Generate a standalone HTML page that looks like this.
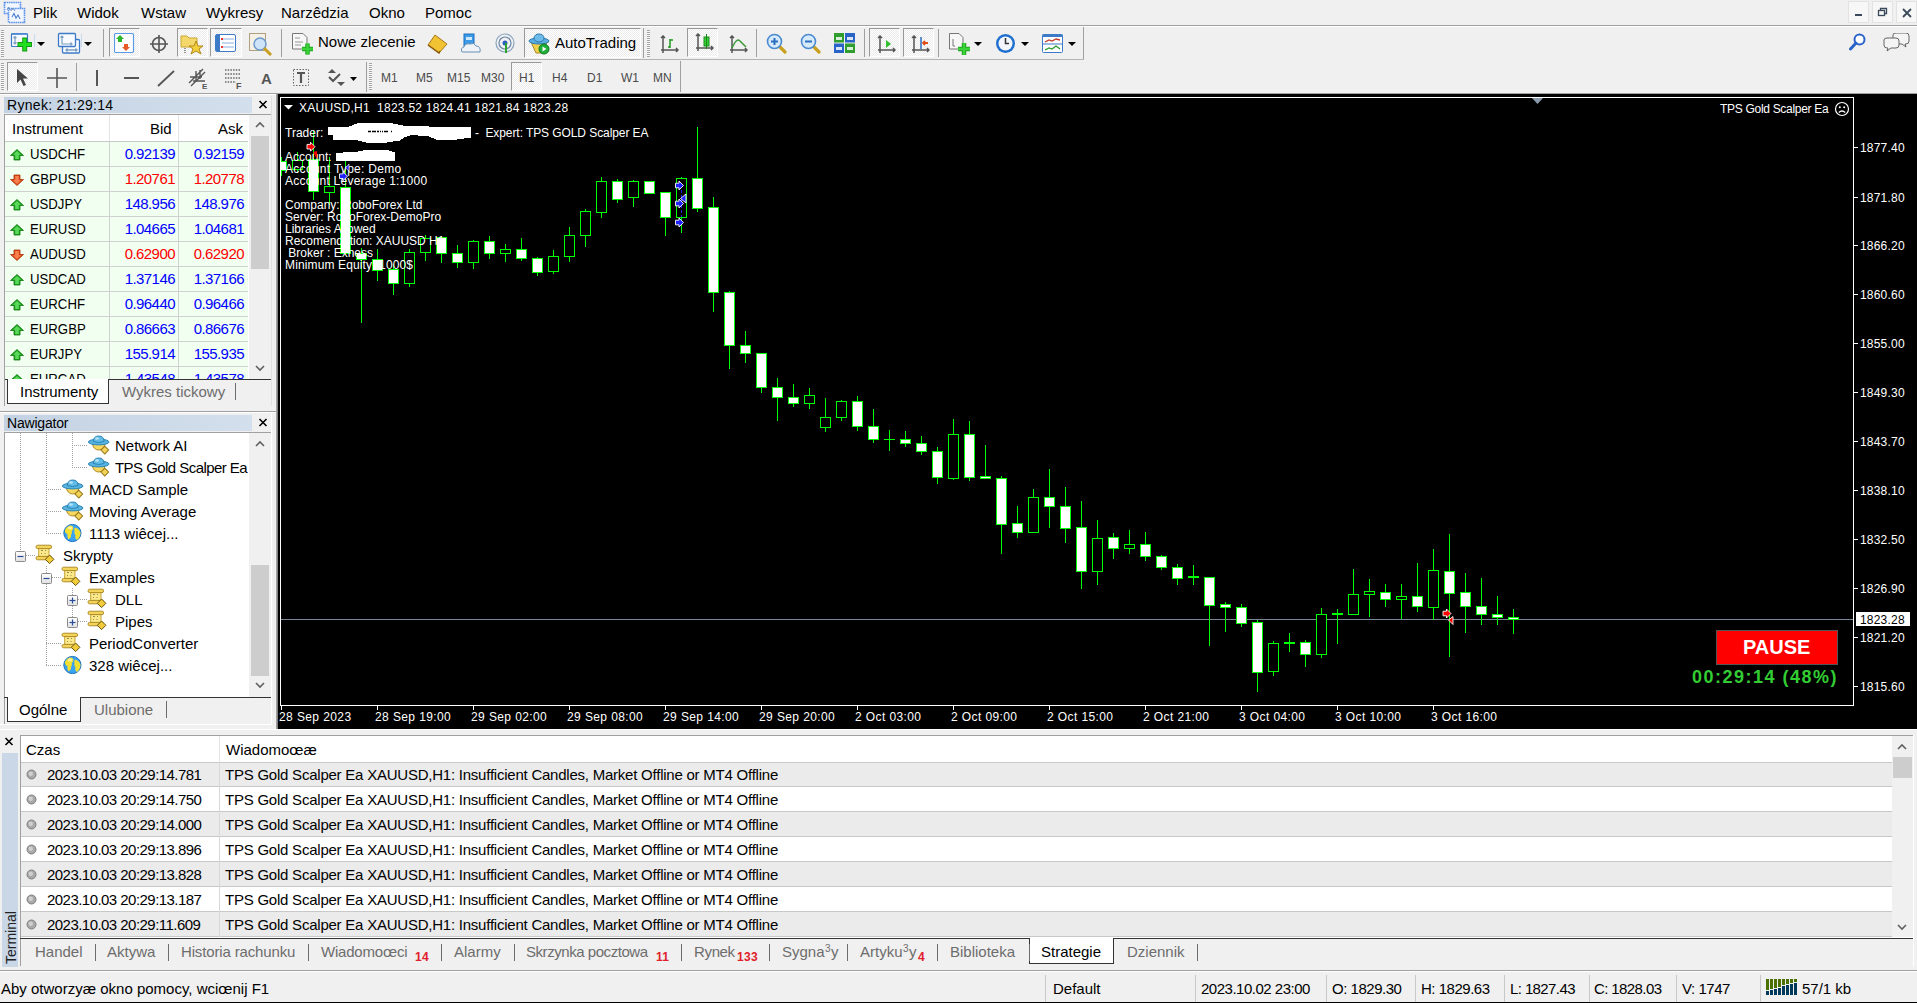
<!DOCTYPE html><html><head><meta charset="utf-8"><style>
*{margin:0;padding:0;box-sizing:border-box}
html,body{width:1917px;height:1003px;overflow:hidden;background:#f0f0f0;font-family:"Liberation Sans",sans-serif;color:#000}
.a{position:absolute}
.t{position:absolute;white-space:nowrap;line-height:1}
.menu{font-size:15px}
.ui{font-size:15px}
.sep{position:absolute;width:1px;background:#a0a0a0}
.grip{position:absolute;width:3px;background:repeating-linear-gradient(to bottom,#a4a4a4 0 1px,#fafafa 1px 2px)}
.pressed{position:absolute;border-top:1px solid #999;border-left:1px solid #999;border-right:1px solid #fff;border-bottom:1px solid #fff;background:repeating-conic-gradient(#ffffff 0 25%,#ebebeb 0 50%) 0 0/2px 2px}
.tf{position:absolute;font-size:12px;color:#4a4a4a;white-space:nowrap;line-height:1;font-weight:normal}
.row{position:absolute;left:5px;width:243px;height:25px;background:#f0fff0;border-bottom:1px solid #d0d0d0}
.cell{position:absolute;white-space:nowrap;line-height:1;font-size:15px}
.trow{position:absolute;left:21px;width:1871px;height:25px;border-bottom:1px solid #c8c8c8}
.chart{position:absolute;font-size:12px;color:#fff;white-space:nowrap;line-height:1}
</style></head><body>
<svg class="a" style="left:3px;top:1px" width="23" height="23" viewBox="0 0 23 23">
<rect x="1.5" y="1.5" width="16" height="11" fill="#f2f7ff" stroke="#5f93ea" stroke-width="1.6" stroke-dasharray="1.6 0.6"/>
<rect x="5.5" y="7.5" width="16" height="14" fill="#f2f7ff" stroke="#5f93ea" stroke-width="1.6" stroke-dasharray="1.6 0.6"/>
<path d="M4 9 L5.5 6 L7 9 H9 L10 7 L12 10" stroke="#6a90c8" fill="none" stroke-width="1"/>
<path d="M9 16 L11 12.5 L13 17 L15 14 L17 18" stroke="#4a7fd0" fill="none" stroke-width="1.1"/>
</svg>
<div class="t menu" style="left:33px;top:5px">Plik</div>
<div class="t menu" style="left:77px;top:5px">Widok</div>
<div class="t menu" style="left:141px;top:5px">Wstaw</div>
<div class="t menu" style="left:206px;top:5px">Wykresy</div>
<div class="t menu" style="left:281px;top:5px">Narzêdzia</div>
<div class="t menu" style="left:369px;top:5px">Okno</div>
<div class="t menu" style="left:425px;top:5px">Pomoc</div>
<div class="a" style="left:1848px;top:1px;width:21px;height:22px;background:#f7f7f7;border:1px solid #e2e2e2"></div>
<div class="a" style="left:1872px;top:1px;width:21px;height:22px;background:#f7f7f7;border:1px solid #e2e2e2"></div>
<div class="a" style="left:1896px;top:1px;width:21px;height:22px;background:#f7f7f7;border:1px solid #e2e2e2"></div>
<div class="a" style="left:1855px;top:14px;width:7px;height:2px;background:#3a4a5a"></div>
<svg class="a" style="left:1877px;top:6px" width="12" height="12" viewBox="0 0 12 12"><rect x="1.5" y="4.5" width="6" height="5" fill="none" stroke="#3a4a5a" stroke-width="1.3"/><path d="M3.5 4.5 V2.5 H9.5 V7.5 H7.5" fill="none" stroke="#3a4a5a" stroke-width="1.3"/></svg>
<svg class="a" style="left:1901px;top:7px" width="12" height="12" viewBox="0 0 12 12"><path d="M2 2 L10 10 M10 2 L2 10" stroke="#3a4a5a" stroke-width="1.8"/></svg>
<div class="a" style="left:0;top:25px;width:1917px;height:1px;background:#a0a0a0"></div>
<div class="a" style="left:0;top:26px;width:1917px;height:1px;background:#fff"></div>
<div class="a" style="left:0;top:59px;width:1084px;height:1px;background:#b4b4b4"></div>
<div class="grip" style="left:1px;top:30px;height:27px"></div>
<svg class="a" style="left:10px;top:32px" width="24" height="21" viewBox="0 0 24 21">
<rect x="1.5" y="1.5" width="16" height="13" rx="1" fill="#f7fbff" stroke="#3d7ac7" stroke-width="1.2"/><path d="M2 2.2 H17" stroke="#5a94d8" stroke-width="1.5"/>
<path d="M5 4.5 V12 M3.5 6 L5 4.5 L6.5 6 M3.5 10.5 L5 12 L6.5 10.5" stroke="#7e9fc0" stroke-width="1.2" fill="none"/>
<path d="M7.5 12.5 H22 M14.7 5.5 V19.5" stroke="#129a12" stroke-width="5"/><path d="M8.5 12.5 H21 M14.7 6.5 V18.5" stroke="#20e020" stroke-width="3"/>
</svg>
<div class="a" style="left:34px;top:34px;width:1px;height:13px;background:#c8daf0"></div>
<svg class="a" style="left:37px;top:42px" width="9" height="5"><path d="M0 0 H8 L4 4 Z" fill="#000"/></svg>
<svg class="a" style="left:57px;top:32px" width="24" height="23" viewBox="0 0 24 23">
<rect x="5.5" y="7.5" width="17" height="13.5" rx="1" fill="#fafcff" stroke="#3d7ac7" stroke-width="1.3"/>
<rect x="1.5" y="1.5" width="17" height="13" rx="1" fill="#f7fbff" stroke="#3d7ac7" stroke-width="1.3"/>
<path d="M5 4 V12 H15 M3.5 5.5 L5 4 L6.5 5.5 M13.5 10.5 L15 12 L13.5 13.5" stroke="#7e9fc0" stroke-width="1.2" fill="none"/>
<path d="M9 18 H20 M10.5 16.5 L9 18 L10.5 19.5 M18.5 16.5 L20 18 L18.5 19.5" stroke="#7e9fc0" stroke-width="1.4" fill="none"/>
</svg>
<div class="a" style="left:81px;top:34px;width:1px;height:13px;background:#c8daf0"></div>
<svg class="a" style="left:84px;top:42px" width="9" height="5"><path d="M0 0 H8 L4 4 Z" fill="#000"/></svg>
<div class="sep" style="left:103px;top:29px;height:28px"></div>
<div class="pressed" style="left:109px;top:28px;width:31px;height:29px"></div>
<svg class="a" style="left:114px;top:33px" width="21" height="21" viewBox="0 0 21 21">
<rect x="0.5" y="0.5" width="19" height="19" rx="1.5" fill="#fff" stroke="#5b9be6" stroke-width="1.2"/>
<path d="M6 2 L10 6 H8 V9 H4 V6 H2 Z" fill="#2bb52b"/><path d="M12 18 L16 14 H14 V11 H10 V14 H8 Z" fill="#e65a2a"/>
</svg>
<svg class="a" style="left:149px;top:34px" width="20" height="20" viewBox="0 0 20 20">
<circle cx="10" cy="10" r="6.5" fill="none" stroke="#555" stroke-width="1.6"/><path d="M10 1 V19 M1 10 H19" stroke="#555" stroke-width="1.6"/>
</svg>
<div class="pressed" style="left:177px;top:28px;width:31px;height:29px"></div>
<svg class="a" style="left:180px;top:33px" width="25" height="22" viewBox="0 0 25 22">
<path d="M1 3 H7 L9 5 H17 V14 H1 Z" fill="#f5d86b" stroke="#c9a531"/><path d="M16 8 L18 13 L23 13 L19 16 L21 21 L16 18 L11 21 L13 16 L9 13 L14 13 Z" fill="#f2cf3a" stroke="#b08a20"/>
<path d="M5 15 V21" stroke="#333" stroke-dasharray="1 1"/>
</svg>
<div class="pressed" style="left:210px;top:28px;width:32px;height:29px"></div>
<svg class="a" style="left:215px;top:34px" width="22" height="18" viewBox="0 0 22 18">
<rect x="0.5" y="0.5" width="20" height="17" rx="1.5" fill="#fff" stroke="#3d7ac7"/><rect x="1" y="1" width="4" height="16" fill="#3d7ac7"/>
<path d="M7 5 H19 M7 9 H19 M7 13 H19" stroke="#8ab0e0"/><rect x="6" y="4" width="2" height="2" fill="#e33"/><rect x="6" y="12" width="2" height="2" fill="#e33"/>
</svg>
<svg class="a" style="left:249px;top:33px" width="24" height="23" viewBox="0 0 24 23">
<rect x="0.5" y="0.5" width="16" height="17" fill="#f5f0e6" stroke="#b0a080"/>
<circle cx="11" cy="11" r="6" fill="#cfe3f7" stroke="#6c9acb" stroke-width="1.5"/><path d="M15 15 L22 22" stroke="#c9a020" stroke-width="3"/>
</svg>
<div class="sep" style="left:281px;top:29px;height:28px"></div>
<svg class="a" style="left:292px;top:33px" width="23" height="23" viewBox="0 0 23 23">
<path d="M0.5 0.5 H11 L15 4.5 V16 H0.5 Z" fill="#f7f7f7" stroke="#777"/><path d="M3 5 H8 M3 9 H11 M3 12 H9" stroke="#999"/>
<path d="M10 16 H21 M15.5 10.5 V21.5" stroke="#1fa51f" stroke-width="4.5"/><path d="M10 16 H21 M15.5 10.5 V21.5" stroke="#39d239" stroke-width="2.5"/>
</svg>
<div class="t ui" style="left:318px;top:34px">Nowe zlecenie</div>
<svg class="a" style="left:427px;top:34px" width="21" height="20" viewBox="0 0 21 20">
<path d="M8 1 L20 10 L12 19 L1 11 Z" fill="#f1c232" stroke="#a8791a"/><path d="M1 11 L12 19 L13 17" fill="none" stroke="#8a5a10" stroke-width="1.5"/>
</svg>
<svg class="a" style="left:460px;top:33px" width="22" height="21" viewBox="0 0 22 21">
<rect x="4" y="1" width="10" height="12" fill="#3a9ae6" stroke="#1b6fc0"/><rect x="6" y="4" width="6" height="3" fill="#cde6fa"/>
<path d="M2 19 Q0 15 4 14 Q5 10 10 11 Q14 9 16 13 Q21 13 20 19 Z" fill="#eef3f8" stroke="#6b8fb5"/>
</svg>
<svg class="a" style="left:494px;top:33px" width="22" height="21" viewBox="0 0 22 21">
<circle cx="11" cy="10" r="9" fill="none" stroke="#8aa4c0" stroke-width="1.2"/><circle cx="11" cy="10" r="6" fill="none" stroke="#6a86a8" stroke-width="1.2"/><circle cx="11" cy="10" r="2.5" fill="#2a5fc0"/>
<path d="M12 10 V20" stroke="#2aa52a" stroke-width="2"/>
</svg>
<div class="pressed" style="left:524px;top:28px;width:117px;height:30px"></div>
<svg class="a" style="left:528px;top:33px" width="22" height="22" viewBox="0 0 22 22">
<path d="M3 9 L19 9 L14 20 L8 20 Z" fill="#f1d04a" stroke="#a88a20"/>
<ellipse cx="11" cy="8" rx="10" ry="3" fill="#5aaee0" stroke="#2a78b0"/><ellipse cx="11" cy="5" rx="5" ry="4" fill="#6cbbe8" stroke="#2a78b0"/>
<circle cx="16" cy="16" r="5" fill="#1fae3a" stroke="#0b7a20"/><path d="M14.5 13.5 L18.5 16 L14.5 18.5 Z" fill="#fff"/>
</svg>
<div class="t ui" style="left:555px;top:35px">AutoTrading</div>
<div class="sep" style="left:643px;top:28px;height:30px"></div>
<div class="grip" style="left:647px;top:30px;height:27px"></div>
<svg class="a" style="left:660px;top:35px" width="19" height="19" viewBox="0 0 19 19">
<path d="M3 1 V18 M1 15 H18 M1 3 L3 1 L5 3 M16 13 L18 15 L16 17" stroke="#555" stroke-width="1.5" fill="none"/><path d="M10 4 V13 M8 12 H10 M10 5 H13" stroke="#1c9a1c" stroke-width="1.5"/></svg>
<div class="pressed" style="left:687px;top:28px;width:31px;height:29px"></div>
<svg class="a" style="left:695px;top:33px" width="19" height="19" viewBox="0 0 19 19">
<path d="M3 1 V18 M1 15 H18 M1 3 L3 1 L5 3 M16 13 L18 15 L16 17" stroke="#555" stroke-width="1.5" fill="none"/><rect x="9" y="4" width="5" height="9" fill="#35d035" stroke="#1a8a1a"/><path d="M11.5 1 V16" stroke="#1a8a1a"/></svg>
<svg class="a" style="left:729px;top:35px" width="19" height="19" viewBox="0 0 19 19">
<path d="M3 1 V18 M1 15 H18 M1 3 L3 1 L5 3 M16 13 L18 15 L16 17" stroke="#555" stroke-width="1.5" fill="none"/><path d="M3 13 Q8 2 11 6 Q13 8 17 12" stroke="#3a9a3a" stroke-width="1.5" fill="none"/></svg>
<div class="sep" style="left:756px;top:29px;height:28px"></div>
<svg class="a" style="left:766px;top:33px" width="21" height="21" viewBox="0 0 21 21">
<path d="M13 13 L19 19" stroke="#c9a020" stroke-width="3.2" stroke-linecap="round"/><circle cx="8.5" cy="8.5" r="7" fill="#d6eafb" stroke="#4a8ad0" stroke-width="1.6"/><path d="M5 8.5 H12 M8.5 5 V12" stroke="#2a6fc0" stroke-width="2"/></svg>
<svg class="a" style="left:800px;top:33px" width="21" height="21" viewBox="0 0 21 21">
<path d="M13 13 L19 19" stroke="#c9a020" stroke-width="3.2" stroke-linecap="round"/><circle cx="8.5" cy="8.5" r="7" fill="#d6eafb" stroke="#4a8ad0" stroke-width="1.6"/><path d="M5 8.5 H12" stroke="#2a6fc0" stroke-width="2"/></svg>
<svg class="a" style="left:834px;top:33px" width="21" height="20" viewBox="0 0 21 20">
<rect x="0" y="0" width="10" height="9.5" fill="#2f9e2f"/><rect x="11" y="0" width="10" height="9.5" fill="#2a63c8"/><rect x="0" y="10.5" width="10" height="9.5" fill="#2a63c8"/><rect x="11" y="10.5" width="10" height="9.5" fill="#2f9e2f"/>
<rect x="2" y="4" width="6" height="3" fill="#d8f0d8"/><rect x="13" y="4" width="6" height="3" fill="#d8e4f8"/><rect x="2" y="14" width="6" height="3" fill="#d8e4f8"/><rect x="13" y="14" width="6" height="3" fill="#d8f0d8"/>
</svg>
<div class="sep" style="left:864px;top:29px;height:28px"></div>
<div class="pressed" style="left:869px;top:28px;width:31px;height:29px"></div>
<svg class="a" style="left:877px;top:35px" width="19" height="19" viewBox="0 0 19 19">
<path d="M3 1 V18 M1 15 H18 M1 3 L3 1 L5 3 M16 13 L18 15 L16 17" stroke="#555" stroke-width="1.5" fill="none"/><path d="M9 5 L14 9 L9 13 Z" fill="#2fbf2f"/></svg>
<div class="pressed" style="left:903px;top:28px;width:31px;height:29px"></div>
<svg class="a" style="left:911px;top:35px" width="19" height="19" viewBox="0 0 19 19">
<path d="M3 1 V18 M1 15 H18 M1 3 L3 1 L5 3 M16 13 L18 15 L16 17" stroke="#555" stroke-width="1.5" fill="none"/><path d="M10 2 V14" stroke="#2a6fc0" stroke-width="1.5"/><path d="M17 8 H12 M14 6 L12 8 L14 10" stroke="#e0501a" stroke-width="1.8" fill="none"/></svg>
<div class="sep" style="left:938px;top:29px;height:28px"></div>
<svg class="a" style="left:949px;top:33px" width="22" height="23" viewBox="0 0 22 23">
<path d="M0.5 0.5 H10 L14 4.5 V16 H0.5 Z" fill="#f7f7f7" stroke="#777"/><path d="M4 6 V13 H6" stroke="#777" fill="none"/>
<path d="M9 16 H21 M15 10 V22" stroke="#1fa51f" stroke-width="4.5"/><path d="M9 16 H21 M15 10 V22" stroke="#39d239" stroke-width="2.5"/>
</svg>
<svg class="a" style="left:974px;top:42px" width="9" height="5"><path d="M0 0 H8 L4 4 Z" fill="#000"/></svg>
<svg class="a" style="left:995px;top:33px" width="21" height="21" viewBox="0 0 21 21">
<circle cx="10.5" cy="10.5" r="9.5" fill="#1f6fd0"/><circle cx="10.5" cy="10.5" r="7" fill="#f2f6fb"/><path d="M10.5 5 V10.5 H14" stroke="#333" stroke-width="1.5" fill="none"/>
</svg>
<svg class="a" style="left:1021px;top:42px" width="9" height="5"><path d="M0 0 H8 L4 4 Z" fill="#000"/></svg>
<svg class="a" style="left:1042px;top:34px" width="21" height="19" viewBox="0 0 21 19">
<rect x="0.5" y="0.5" width="20" height="18" rx="1" fill="#fff" stroke="#3d7ac7"/><rect x="0.5" y="0.5" width="20" height="2.5" fill="#3d7ac7"/><path d="M1 10 H20" stroke="#3d7ac7"/>
<path d="M3 8 L7 6 L10 7 L14 5 L18 6" stroke="#c0392b" fill="none" stroke-width="1.3"/><path d="M3 16 L7 14 L10 15 L14 12 L18 15" stroke="#2a9a2a" fill="none" stroke-width="1.3"/>
</svg>
<svg class="a" style="left:1068px;top:42px" width="9" height="5"><path d="M0 0 H8 L4 4 Z" fill="#000"/></svg>
<div class="a" style="left:1083px;top:27px;width:1px;height:32px;background:#a0a0a0"></div>
<svg class="a" style="left:1849px;top:33px" width="17" height="18" viewBox="0 0 17 18">
<circle cx="10.5" cy="6.5" r="5" fill="#fff" stroke="#2a63c8" stroke-width="2"/><path d="M7 10 L1.5 16" stroke="#2a63c8" stroke-width="3" stroke-linecap="round"/>
</svg>
<svg class="a" style="left:1883px;top:33px" width="27" height="19" viewBox="0 0 27 19">
<path d="M10 2 Q10 0 13 0 H23 Q26 0 26 3 V8 Q26 11 23 11 H22 L23 14 L19 11 H13 Q10 11 10 8 Z" fill="#f4f4f4" stroke="#666"/>
<path d="M1 7 Q1 5 4 5 H13 Q16 5 16 8 V12 Q16 15 13 15 H8 L4 18 L5 15 H4 Q1 15 1 12 Z" fill="#f4f4f4" stroke="#666"/>
</svg>
<div class="a" style="left:0;top:93px;width:1917px;height:1px;background:#a0a0a0"></div>
<div class="grip" style="left:1px;top:63px;height:27px"></div>
<div class="pressed" style="left:7px;top:62px;width:31px;height:29px"></div>
<svg class="a" style="left:16px;top:68px" width="14" height="19" viewBox="0 0 14 19"><path d="M1 1 V15 L4.5 11.5 L7.5 18 L10 17 L7 10.5 L12 10.5 Z" fill="#444"/></svg>
<svg class="a" style="left:47px;top:68px" width="20" height="20" viewBox="0 0 20 20"><path d="M10 0 V20 M0 10 H20" stroke="#555" stroke-width="1.6"/></svg>
<div class="sep" style="left:76px;top:63px;height:28px"></div>
<div class="a" style="left:96px;top:70px;width:2px;height:16px;background:#555"></div>
<div class="a" style="left:124px;top:77px;width:15px;height:2px;background:#555"></div>
<svg class="a" style="left:157px;top:70px" width="18" height="17" viewBox="0 0 18 17"><path d="M1 16 L17 1" stroke="#555" stroke-width="1.8"/></svg>
<svg class="a" style="left:188px;top:68px" width="22" height="21" viewBox="0 0 22 21">
<path d="M1 15 L15 1 M3 18 L17 4 M2 9 H14 M5 13 H17 M8 3 V14 M12 2 V11" stroke="#555" stroke-width="1.4"/><text x="14" y="21" font-size="8" font-weight="bold" fill="#555" font-family="Liberation Sans">E</text></svg>
<svg class="a" style="left:224px;top:68px" width="20" height="21" viewBox="0 0 20 21">
<path d="M1 2 H17 M1 6 H17 M1 10 H17 M1 14 H12" stroke="#666" stroke-width="1.3" stroke-dasharray="1.5 1.2"/><text x="12" y="21" font-size="9" font-weight="bold" fill="#555" font-family="Liberation Sans">F</text></svg>
<div class="t" style="left:261px;top:71px;font-size:15px;font-weight:bold;color:#555">A</div>
<svg class="a" style="left:293px;top:68px" width="17" height="19" viewBox="0 0 17 19">
<rect x="0.5" y="1.5" width="15" height="16" fill="none" stroke="#666" stroke-dasharray="1.5 1.5"/><path d="M4 5 H12 M8 5 V15" stroke="#555" stroke-width="2.2"/></svg>
<svg class="a" style="left:327px;top:69px" width="19" height="18" viewBox="0 0 19 18">
<path d="M5 0 L9 4 H1 Z M14 17 L18 13 H10 Z" fill="#555"/><path d="M2 8 L6 12 L13 5" stroke="#555" stroke-width="2" fill="none"/></svg>
<svg class="a" style="left:350px;top:77px" width="8" height="5"><path d="M0 0 H7 L3.5 4 Z" fill="#000"/></svg>
<div class="sep" style="left:366px;top:62px;height:30px"></div>
<div class="grip" style="left:369px;top:63px;height:27px"></div>
<div class="pressed" style="left:511px;top:62px;width:31px;height:29px"></div>
<div class="tf" style="left:381px;top:72px">M1</div>
<div class="tf" style="left:416px;top:72px">M5</div>
<div class="tf" style="left:447px;top:72px">M15</div>
<div class="tf" style="left:481px;top:72px">M30</div>
<div class="tf" style="left:519px;top:72px">H1</div>
<div class="tf" style="left:552px;top:72px">H4</div>
<div class="tf" style="left:587px;top:72px">D1</div>
<div class="tf" style="left:621px;top:72px">W1</div>
<div class="tf" style="left:653px;top:72px">MN</div>
<div class="sep" style="left:680px;top:61px;height:31px"></div>
<div class="a" style="left:0;top:94px;width:277px;height:1px;background:#fff"></div>
<div class="a" style="left:4px;top:97px;width:248px;height:16px;background:linear-gradient(to right,#c3d2e3,#d3dfec)"></div>
<div class="t" style="left:7px;top:98px;font-size:14px;letter-spacing:0.3px">Rynek: 21:29:14</div>
<svg class="a" style="left:258px;top:100px" width="10" height="9" viewBox="0 0 10 9"><path d="M1.5 1 L8.5 8 M8.5 1 L1.5 8" stroke="#000" stroke-width="1.6"/></svg>
<div class="a" style="left:4px;top:114px;width:267px;height:265px;background:#fff;border-top:1px solid #a0a0a0;border-left:1px solid #a0a0a0"></div>
<div class="a" style="left:109px;top:115px;width:1px;height:26px;background:#e5e5e5"></div>
<div class="a" style="left:178px;top:115px;width:1px;height:26px;background:#e5e5e5"></div>
<div class="cell" style="left:12px;top:121px">Instrument</div>
<div class="cell" style="left:150px;top:121px">Bid</div>
<div class="cell" style="left:218px;top:121px">Ask</div>
<div class="a" style="left:5px;top:141px;width:243px;height:1px;background:#c8c8c8"></div>
<div class="a" style="left:5px;top:142px;width:243px;height:24px;background:#f0fff0;overflow:hidden">
<svg class="a" style="left:5px;top:7px" width="14" height="12" viewBox="0 0 14 12"><path d="M7 0.5 L13.5 6.5 H10 V11 H4 V6.5 H0.5 Z" fill="#1ea21e" stroke="#0c780c" stroke-width="0.8"/><path d="M7 2 L11 5.8 H8.8 V10 H5.2 V5.8 H3 Z" fill="#5ad85a"/></svg>
<div class="cell" style="left:25px;top:4px;transform:scaleX(0.88);transform-origin:0 0">USDCHF</div>
<div class="cell" style="right:73px;top:4px;color:#0000ff;letter-spacing:-0.55px">0.92139</div>
<div class="cell" style="right:4px;top:4px;color:#0000ff;letter-spacing:-0.55px">0.92159</div>
</div>
<div class="a" style="left:5px;top:166px;width:243px;height:1px;background:#d0d0d0"></div>
<div class="a" style="left:5px;top:167px;width:243px;height:24px;background:#f0fff0;overflow:hidden">
<svg class="a" style="left:5px;top:7px" width="14" height="12" viewBox="0 0 14 12"><path d="M7 11.5 L13.5 5.5 H10 V1 H4 V5.5 H0.5 Z" fill="#e04a14" stroke="#a8300a" stroke-width="0.8"/><path d="M7 10 L11 6.2 H8.8 V2 H5.2 V6.2 H3 Z" fill="#f88050"/></svg>
<div class="cell" style="left:25px;top:4px;transform:scaleX(0.88);transform-origin:0 0">GBPUSD</div>
<div class="cell" style="right:73px;top:4px;color:#ff0000;letter-spacing:-0.55px">1.20761</div>
<div class="cell" style="right:4px;top:4px;color:#ff0000;letter-spacing:-0.55px">1.20778</div>
</div>
<div class="a" style="left:5px;top:191px;width:243px;height:1px;background:#d0d0d0"></div>
<div class="a" style="left:5px;top:192px;width:243px;height:24px;background:#f0fff0;overflow:hidden">
<svg class="a" style="left:5px;top:7px" width="14" height="12" viewBox="0 0 14 12"><path d="M7 0.5 L13.5 6.5 H10 V11 H4 V6.5 H0.5 Z" fill="#1ea21e" stroke="#0c780c" stroke-width="0.8"/><path d="M7 2 L11 5.8 H8.8 V10 H5.2 V5.8 H3 Z" fill="#5ad85a"/></svg>
<div class="cell" style="left:25px;top:4px;transform:scaleX(0.88);transform-origin:0 0">USDJPY</div>
<div class="cell" style="right:73px;top:4px;color:#0000ff;letter-spacing:-0.55px">148.956</div>
<div class="cell" style="right:4px;top:4px;color:#0000ff;letter-spacing:-0.55px">148.976</div>
</div>
<div class="a" style="left:5px;top:216px;width:243px;height:1px;background:#d0d0d0"></div>
<div class="a" style="left:5px;top:217px;width:243px;height:24px;background:#f0fff0;overflow:hidden">
<svg class="a" style="left:5px;top:7px" width="14" height="12" viewBox="0 0 14 12"><path d="M7 0.5 L13.5 6.5 H10 V11 H4 V6.5 H0.5 Z" fill="#1ea21e" stroke="#0c780c" stroke-width="0.8"/><path d="M7 2 L11 5.8 H8.8 V10 H5.2 V5.8 H3 Z" fill="#5ad85a"/></svg>
<div class="cell" style="left:25px;top:4px;transform:scaleX(0.88);transform-origin:0 0">EURUSD</div>
<div class="cell" style="right:73px;top:4px;color:#0000ff;letter-spacing:-0.55px">1.04665</div>
<div class="cell" style="right:4px;top:4px;color:#0000ff;letter-spacing:-0.55px">1.04681</div>
</div>
<div class="a" style="left:5px;top:241px;width:243px;height:1px;background:#d0d0d0"></div>
<div class="a" style="left:5px;top:242px;width:243px;height:24px;background:#f0fff0;overflow:hidden">
<svg class="a" style="left:5px;top:7px" width="14" height="12" viewBox="0 0 14 12"><path d="M7 11.5 L13.5 5.5 H10 V1 H4 V5.5 H0.5 Z" fill="#e04a14" stroke="#a8300a" stroke-width="0.8"/><path d="M7 10 L11 6.2 H8.8 V2 H5.2 V6.2 H3 Z" fill="#f88050"/></svg>
<div class="cell" style="left:25px;top:4px;transform:scaleX(0.88);transform-origin:0 0">AUDUSD</div>
<div class="cell" style="right:73px;top:4px;color:#ff0000;letter-spacing:-0.55px">0.62900</div>
<div class="cell" style="right:4px;top:4px;color:#ff0000;letter-spacing:-0.55px">0.62920</div>
</div>
<div class="a" style="left:5px;top:266px;width:243px;height:1px;background:#d0d0d0"></div>
<div class="a" style="left:5px;top:267px;width:243px;height:24px;background:#f0fff0;overflow:hidden">
<svg class="a" style="left:5px;top:7px" width="14" height="12" viewBox="0 0 14 12"><path d="M7 0.5 L13.5 6.5 H10 V11 H4 V6.5 H0.5 Z" fill="#1ea21e" stroke="#0c780c" stroke-width="0.8"/><path d="M7 2 L11 5.8 H8.8 V10 H5.2 V5.8 H3 Z" fill="#5ad85a"/></svg>
<div class="cell" style="left:25px;top:4px;transform:scaleX(0.88);transform-origin:0 0">USDCAD</div>
<div class="cell" style="right:73px;top:4px;color:#0000ff;letter-spacing:-0.55px">1.37146</div>
<div class="cell" style="right:4px;top:4px;color:#0000ff;letter-spacing:-0.55px">1.37166</div>
</div>
<div class="a" style="left:5px;top:291px;width:243px;height:1px;background:#d0d0d0"></div>
<div class="a" style="left:5px;top:292px;width:243px;height:24px;background:#f0fff0;overflow:hidden">
<svg class="a" style="left:5px;top:7px" width="14" height="12" viewBox="0 0 14 12"><path d="M7 0.5 L13.5 6.5 H10 V11 H4 V6.5 H0.5 Z" fill="#1ea21e" stroke="#0c780c" stroke-width="0.8"/><path d="M7 2 L11 5.8 H8.8 V10 H5.2 V5.8 H3 Z" fill="#5ad85a"/></svg>
<div class="cell" style="left:25px;top:4px;transform:scaleX(0.88);transform-origin:0 0">EURCHF</div>
<div class="cell" style="right:73px;top:4px;color:#0000ff;letter-spacing:-0.55px">0.96440</div>
<div class="cell" style="right:4px;top:4px;color:#0000ff;letter-spacing:-0.55px">0.96466</div>
</div>
<div class="a" style="left:5px;top:316px;width:243px;height:1px;background:#d0d0d0"></div>
<div class="a" style="left:5px;top:317px;width:243px;height:24px;background:#f0fff0;overflow:hidden">
<svg class="a" style="left:5px;top:7px" width="14" height="12" viewBox="0 0 14 12"><path d="M7 0.5 L13.5 6.5 H10 V11 H4 V6.5 H0.5 Z" fill="#1ea21e" stroke="#0c780c" stroke-width="0.8"/><path d="M7 2 L11 5.8 H8.8 V10 H5.2 V5.8 H3 Z" fill="#5ad85a"/></svg>
<div class="cell" style="left:25px;top:4px;transform:scaleX(0.88);transform-origin:0 0">EURGBP</div>
<div class="cell" style="right:73px;top:4px;color:#0000ff;letter-spacing:-0.55px">0.86663</div>
<div class="cell" style="right:4px;top:4px;color:#0000ff;letter-spacing:-0.55px">0.86676</div>
</div>
<div class="a" style="left:5px;top:341px;width:243px;height:1px;background:#d0d0d0"></div>
<div class="a" style="left:5px;top:342px;width:243px;height:24px;background:#f0fff0;overflow:hidden">
<svg class="a" style="left:5px;top:7px" width="14" height="12" viewBox="0 0 14 12"><path d="M7 0.5 L13.5 6.5 H10 V11 H4 V6.5 H0.5 Z" fill="#1ea21e" stroke="#0c780c" stroke-width="0.8"/><path d="M7 2 L11 5.8 H8.8 V10 H5.2 V5.8 H3 Z" fill="#5ad85a"/></svg>
<div class="cell" style="left:25px;top:4px;transform:scaleX(0.88);transform-origin:0 0">EURJPY</div>
<div class="cell" style="right:73px;top:4px;color:#0000ff;letter-spacing:-0.55px">155.914</div>
<div class="cell" style="right:4px;top:4px;color:#0000ff;letter-spacing:-0.55px">155.935</div>
</div>
<div class="a" style="left:5px;top:366px;width:243px;height:1px;background:#d0d0d0"></div>
<div class="a" style="left:5px;top:367px;width:243px;height:12px;background:#f0fff0;overflow:hidden">
<svg class="a" style="left:5px;top:7px" width="14" height="12" viewBox="0 0 14 12"><path d="M7 0.5 L13.5 6.5 H10 V11 H4 V6.5 H0.5 Z" fill="#1ea21e" stroke="#0c780c" stroke-width="0.8"/><path d="M7 2 L11 5.8 H8.8 V10 H5.2 V5.8 H3 Z" fill="#5ad85a"/></svg>
<div class="cell" style="left:25px;top:4px;transform:scaleX(0.88);transform-origin:0 0">EURCAD</div>
<div class="cell" style="right:73px;top:4px;color:#0000ff;letter-spacing:-0.55px">1.43548</div>
<div class="cell" style="right:4px;top:4px;color:#0000ff;letter-spacing:-0.55px">1.43578</div>
</div>
<div class="a" style="left:109px;top:142px;width:1px;height:237px;background:#d0d0d0"></div>
<div class="a" style="left:178px;top:142px;width:1px;height:237px;background:#d0d0d0"></div>
<div class="a" style="left:249px;top:115px;width:22px;height:264px;background:#f0f0f0"></div>
<svg class="a" style="left:255px;top:121px" width="10" height="7"><path d="M1 6 L5 2 L9 6" stroke="#606060" stroke-width="1.6" fill="none"/></svg>
<div class="a" style="left:251px;top:136px;width:18px;height:133px;background:#cdcdcd"></div>
<svg class="a" style="left:255px;top:365px" width="10" height="7"><path d="M1 1 L5 5 L9 1" stroke="#606060" stroke-width="1.6" fill="none"/></svg>
<div class="a" style="left:4px;top:379px;width:267px;height:1px;background:#333"></div>
<div class="a" style="left:7px;top:379px;width:102px;height:25px;background:#fff;border:1px solid #333;border-top:none"></div>
<div class="t ui" style="left:20px;top:384px">Instrumenty</div>
<div class="t ui" style="left:122px;top:384px;color:#6d6d6d">Wykres tickowy</div>
<div class="a" style="left:235px;top:383px;width:1px;height:17px;background:#6d6d6d"></div>
<div class="a" style="left:271px;top:96px;width:1px;height:310px;background:#e0e0e0"></div>
<div class="a" style="left:4px;top:378px;width:1px;height:28px;background:#a0a0a0"></div>
<div class="a" style="left:0;top:411px;width:277px;height:1px;background:#a0a0a0"></div>
<div class="a" style="left:0;top:412px;width:277px;height:1px;background:#fff"></div>
<div class="a" style="left:4px;top:415px;width:248px;height:16px;background:linear-gradient(to right,#c3d2e3,#d3dfec)"></div>
<div class="t" style="left:7px;top:416px;font-size:14px;letter-spacing:-0.2px">Nawigator</div>
<svg class="a" style="left:258px;top:418px" width="10" height="9" viewBox="0 0 10 9"><path d="M1.5 1 L8.5 8 M8.5 1 L1.5 8" stroke="#000" stroke-width="1.6"/></svg>
<div class="a" style="left:4px;top:432px;width:267px;height:265px;background:#fff;border-top:1px solid #a0a0a0;border-left:1px solid #a0a0a0"></div>
<div class="a" style="left:4px;top:697px;width:1px;height:27px;background:#a0a0a0"></div>
<div class="a" style="left:20px;top:433px;width:1px;height:122px;background:repeating-linear-gradient(to bottom,#a0a0a0 0 1px,transparent 1px 2px)"></div>
<div class="a" style="left:46px;top:433px;width:1px;height:100px;background:repeating-linear-gradient(to bottom,#a0a0a0 0 1px,transparent 1px 2px)"></div>
<div class="a" style="left:72px;top:433px;width:1px;height:34px;background:repeating-linear-gradient(to bottom,#a0a0a0 0 1px,transparent 1px 2px)"></div>
<div class="a" style="left:72px;top:445px;width:16px;height:1px;background:repeating-linear-gradient(to right,#a0a0a0 0 1px,transparent 1px 2px)"></div>
<div class="a" style="left:72px;top:467px;width:16px;height:1px;background:repeating-linear-gradient(to right,#a0a0a0 0 1px,transparent 1px 2px)"></div>
<div class="a" style="left:46px;top:489px;width:16px;height:1px;background:repeating-linear-gradient(to right,#a0a0a0 0 1px,transparent 1px 2px)"></div>
<div class="a" style="left:46px;top:511px;width:16px;height:1px;background:repeating-linear-gradient(to right,#a0a0a0 0 1px,transparent 1px 2px)"></div>
<div class="a" style="left:46px;top:533px;width:16px;height:1px;background:repeating-linear-gradient(to right,#a0a0a0 0 1px,transparent 1px 2px)"></div>
<div class="a" style="left:46px;top:566px;width:1px;height:99px;background:repeating-linear-gradient(to bottom,#a0a0a0 0 1px,transparent 1px 2px)"></div>
<div class="a" style="left:72px;top:588px;width:1px;height:33px;background:repeating-linear-gradient(to bottom,#a0a0a0 0 1px,transparent 1px 2px)"></div>
<div class="a" style="left:26px;top:555px;width:10px;height:1px;background:repeating-linear-gradient(to right,#a0a0a0 0 1px,transparent 1px 2px)"></div>
<div class="a" style="left:52px;top:577px;width:10px;height:1px;background:repeating-linear-gradient(to right,#a0a0a0 0 1px,transparent 1px 2px)"></div>
<div class="a" style="left:78px;top:599px;width:10px;height:1px;background:repeating-linear-gradient(to right,#a0a0a0 0 1px,transparent 1px 2px)"></div>
<div class="a" style="left:78px;top:621px;width:10px;height:1px;background:repeating-linear-gradient(to right,#a0a0a0 0 1px,transparent 1px 2px)"></div>
<div class="a" style="left:46px;top:643px;width:16px;height:1px;background:repeating-linear-gradient(to right,#a0a0a0 0 1px,transparent 1px 2px)"></div>
<div class="a" style="left:46px;top:665px;width:16px;height:1px;background:repeating-linear-gradient(to right,#a0a0a0 0 1px,transparent 1px 2px)"></div>
<svg class="a" style="left:87px;top:435px" width="23" height="21" viewBox="0 0 23 21">
<path d="M5.5 8.5 A6.2 6.5 0 0 0 17.9 8.5 Z" fill="#f6d860" stroke="#b08a20"/>
<rect x="15" y="12.3" width="5.5" height="5.5" transform="rotate(45 17.7 15.1)" fill="#f3d35a" stroke="#9a7a18"/>
<ellipse cx="11.7" cy="7" rx="10.3" ry="2.9" fill="#5ab4e2" stroke="#2a84b4"/>
<path d="M6.3 6.5 Q6.5 1 11.7 1 Q16.9 1 17.1 6.5 Q11.7 8.5 6.3 6.5 Z" fill="#62bce8" stroke="#2a84b4"/>
<ellipse cx="10" cy="3.5" rx="2" ry="1.2" fill="#b8e2f8"/>
</svg>
<div class="t ui" style="left:115px;top:438px">Network AI</div>
<svg class="a" style="left:87px;top:457px" width="23" height="21" viewBox="0 0 23 21">
<path d="M5.5 8.5 A6.2 6.5 0 0 0 17.9 8.5 Z" fill="#f6d860" stroke="#b08a20"/>
<rect x="15" y="12.3" width="5.5" height="5.5" transform="rotate(45 17.7 15.1)" fill="#f3d35a" stroke="#9a7a18"/>
<ellipse cx="11.7" cy="7" rx="10.3" ry="2.9" fill="#5ab4e2" stroke="#2a84b4"/>
<path d="M6.3 6.5 Q6.5 1 11.7 1 Q16.9 1 17.1 6.5 Q11.7 8.5 6.3 6.5 Z" fill="#62bce8" stroke="#2a84b4"/>
<ellipse cx="10" cy="3.5" rx="2" ry="1.2" fill="#b8e2f8"/>
</svg>
<div class="t ui" style="left:115px;top:460px;letter-spacing:-0.55px">TPS Gold Scalper Ea</div>
<svg class="a" style="left:61px;top:479px" width="23" height="21" viewBox="0 0 23 21">
<path d="M5.5 8.5 A6.2 6.5 0 0 0 17.9 8.5 Z" fill="#f6d860" stroke="#b08a20"/>
<rect x="15" y="12.3" width="5.5" height="5.5" transform="rotate(45 17.7 15.1)" fill="#f3d35a" stroke="#9a7a18"/>
<ellipse cx="11.7" cy="7" rx="10.3" ry="2.9" fill="#5ab4e2" stroke="#2a84b4"/>
<path d="M6.3 6.5 Q6.5 1 11.7 1 Q16.9 1 17.1 6.5 Q11.7 8.5 6.3 6.5 Z" fill="#62bce8" stroke="#2a84b4"/>
<ellipse cx="10" cy="3.5" rx="2" ry="1.2" fill="#b8e2f8"/>
</svg>
<div class="t ui" style="left:89px;top:482px">MACD Sample</div>
<svg class="a" style="left:61px;top:501px" width="23" height="21" viewBox="0 0 23 21">
<path d="M5.5 8.5 A6.2 6.5 0 0 0 17.9 8.5 Z" fill="#f6d860" stroke="#b08a20"/>
<rect x="15" y="12.3" width="5.5" height="5.5" transform="rotate(45 17.7 15.1)" fill="#f3d35a" stroke="#9a7a18"/>
<ellipse cx="11.7" cy="7" rx="10.3" ry="2.9" fill="#5ab4e2" stroke="#2a84b4"/>
<path d="M6.3 6.5 Q6.5 1 11.7 1 Q16.9 1 17.1 6.5 Q11.7 8.5 6.3 6.5 Z" fill="#62bce8" stroke="#2a84b4"/>
<ellipse cx="10" cy="3.5" rx="2" ry="1.2" fill="#b8e2f8"/>
</svg>
<div class="t ui" style="left:89px;top:504px">Moving Average</div>
<svg class="a" style="left:62px;top:523px" width="20" height="20" viewBox="0 0 20 20">
<circle cx="10.4" cy="10" r="8.6" fill="#3aa2f0" stroke="#1a70c0"/>
<path d="M3 7 Q5 2.5 9.5 2.5 Q12 3.5 11 6.5 Q9 8 10 10 Q8.5 12 9 14 Q7.5 16.5 6 16 Q5 13 5.5 11 Q2.5 10 3 7 Z" fill="#f2e030"/>
<path d="M13 4.5 Q17 5.5 18.5 9.5 Q18.5 14 15 17 Q12.5 15 13.5 12.5 Q11.5 10.5 12.5 8 Q11.5 6 13 4.5 Z" fill="#f2e030"/>
<ellipse cx="8" cy="5" rx="2.5" ry="1.5" fill="#ffffff" opacity="0.5"/>
</svg>
<div class="t ui" style="left:89px;top:526px">1113 wiêcej...</div>
<svg class="a" style="left:15px;top:551px" width="11" height="11" viewBox="0 0 11 11"><defs><linearGradient id="bg15550" x1="0" y1="0" x2="0" y2="1"><stop offset="0" stop-color="#fff"/><stop offset="1" stop-color="#e0e0e0"/></linearGradient></defs><rect x="0.5" y="0.5" width="10" height="10" rx="1" fill="url(#bg15550)" stroke="#8a8a8a"/><path d="M2.5 5.5 H8.5" stroke="#2a4a9a" stroke-width="1.2"/></svg>
<svg class="a" style="left:34px;top:544px" width="22" height="22" viewBox="0 0 22 22">
<rect x="4.7" y="4" width="10.3" height="9" fill="#fbe98a" stroke="#c09a2a" stroke-width="0.9"/>
<rect x="2" y="1.2" width="15.7" height="3.4" rx="1.7" fill="#f3d45a" stroke="#a8841e" stroke-width="0.9"/>
<rect x="2" y="12.4" width="15.7" height="3.4" rx="1.7" fill="#f3d45a" stroke="#a8841e" stroke-width="0.9"/>
<path d="M7 6.5 H9 M11 6.5 H12 M7 9.5 H8 M10.5 9.5 H11.5" stroke="#9a8a50" stroke-width="1"/>
<path d="M15.6 11 L19.9 15.3 L15.6 19.6 L11.3 15.3 Z" fill="#f0cc3a" stroke="#6a5410" stroke-width="1"/>
</svg>
<div class="t ui" style="left:63px;top:548px">Skrypty</div>
<svg class="a" style="left:41px;top:573px" width="11" height="11" viewBox="0 0 11 11"><defs><linearGradient id="bg41572" x1="0" y1="0" x2="0" y2="1"><stop offset="0" stop-color="#fff"/><stop offset="1" stop-color="#e0e0e0"/></linearGradient></defs><rect x="0.5" y="0.5" width="10" height="10" rx="1" fill="url(#bg41572)" stroke="#8a8a8a"/><path d="M2.5 5.5 H8.5" stroke="#2a4a9a" stroke-width="1.2"/></svg>
<svg class="a" style="left:60px;top:566px" width="22" height="22" viewBox="0 0 22 22">
<rect x="4.7" y="4" width="10.3" height="9" fill="#fbe98a" stroke="#c09a2a" stroke-width="0.9"/>
<rect x="2" y="1.2" width="15.7" height="3.4" rx="1.7" fill="#f3d45a" stroke="#a8841e" stroke-width="0.9"/>
<rect x="2" y="12.4" width="15.7" height="3.4" rx="1.7" fill="#f3d45a" stroke="#a8841e" stroke-width="0.9"/>
<path d="M7 6.5 H9 M11 6.5 H12 M7 9.5 H8 M10.5 9.5 H11.5" stroke="#9a8a50" stroke-width="1"/>
<path d="M15.6 11 L19.9 15.3 L15.6 19.6 L11.3 15.3 Z" fill="#f0cc3a" stroke="#6a5410" stroke-width="1"/>
</svg>
<div class="t ui" style="left:89px;top:570px">Examples</div>
<svg class="a" style="left:67px;top:595px" width="11" height="11" viewBox="0 0 11 11"><defs><linearGradient id="bg67594" x1="0" y1="0" x2="0" y2="1"><stop offset="0" stop-color="#fff"/><stop offset="1" stop-color="#e0e0e0"/></linearGradient></defs><rect x="0.5" y="0.5" width="10" height="10" rx="1" fill="url(#bg67594)" stroke="#8a8a8a"/><path d="M2.5 5.5 H8.5" stroke="#2a4a9a" stroke-width="1.2"/><path d="M5.5 2.5 V8.5" stroke="#2a4a9a" stroke-width="1.2"/></svg>
<svg class="a" style="left:86px;top:588px" width="22" height="22" viewBox="0 0 22 22">
<rect x="4.7" y="4" width="10.3" height="9" fill="#fbe98a" stroke="#c09a2a" stroke-width="0.9"/>
<rect x="2" y="1.2" width="15.7" height="3.4" rx="1.7" fill="#f3d45a" stroke="#a8841e" stroke-width="0.9"/>
<rect x="2" y="12.4" width="15.7" height="3.4" rx="1.7" fill="#f3d45a" stroke="#a8841e" stroke-width="0.9"/>
<path d="M7 6.5 H9 M11 6.5 H12 M7 9.5 H8 M10.5 9.5 H11.5" stroke="#9a8a50" stroke-width="1"/>
<path d="M15.6 11 L19.9 15.3 L15.6 19.6 L11.3 15.3 Z" fill="#f0cc3a" stroke="#6a5410" stroke-width="1"/>
</svg>
<div class="t ui" style="left:115px;top:592px">DLL</div>
<svg class="a" style="left:67px;top:617px" width="11" height="11" viewBox="0 0 11 11"><defs><linearGradient id="bg67616" x1="0" y1="0" x2="0" y2="1"><stop offset="0" stop-color="#fff"/><stop offset="1" stop-color="#e0e0e0"/></linearGradient></defs><rect x="0.5" y="0.5" width="10" height="10" rx="1" fill="url(#bg67616)" stroke="#8a8a8a"/><path d="M2.5 5.5 H8.5" stroke="#2a4a9a" stroke-width="1.2"/><path d="M5.5 2.5 V8.5" stroke="#2a4a9a" stroke-width="1.2"/></svg>
<svg class="a" style="left:86px;top:610px" width="22" height="22" viewBox="0 0 22 22">
<rect x="4.7" y="4" width="10.3" height="9" fill="#fbe98a" stroke="#c09a2a" stroke-width="0.9"/>
<rect x="2" y="1.2" width="15.7" height="3.4" rx="1.7" fill="#f3d45a" stroke="#a8841e" stroke-width="0.9"/>
<rect x="2" y="12.4" width="15.7" height="3.4" rx="1.7" fill="#f3d45a" stroke="#a8841e" stroke-width="0.9"/>
<path d="M7 6.5 H9 M11 6.5 H12 M7 9.5 H8 M10.5 9.5 H11.5" stroke="#9a8a50" stroke-width="1"/>
<path d="M15.6 11 L19.9 15.3 L15.6 19.6 L11.3 15.3 Z" fill="#f0cc3a" stroke="#6a5410" stroke-width="1"/>
</svg>
<div class="t ui" style="left:115px;top:614px">Pipes</div>
<svg class="a" style="left:60px;top:632px" width="22" height="22" viewBox="0 0 22 22">
<rect x="4.7" y="4" width="10.3" height="9" fill="#fbe98a" stroke="#c09a2a" stroke-width="0.9"/>
<rect x="2" y="1.2" width="15.7" height="3.4" rx="1.7" fill="#f3d45a" stroke="#a8841e" stroke-width="0.9"/>
<rect x="2" y="12.4" width="15.7" height="3.4" rx="1.7" fill="#f3d45a" stroke="#a8841e" stroke-width="0.9"/>
<path d="M7 6.5 H9 M11 6.5 H12 M7 9.5 H8 M10.5 9.5 H11.5" stroke="#9a8a50" stroke-width="1"/>
<path d="M15.6 11 L19.9 15.3 L15.6 19.6 L11.3 15.3 Z" fill="#f0cc3a" stroke="#6a5410" stroke-width="1"/>
</svg>
<div class="t ui" style="left:89px;top:636px">PeriodConverter</div>
<svg class="a" style="left:62px;top:655px" width="20" height="20" viewBox="0 0 20 20">
<circle cx="10.4" cy="10" r="8.6" fill="#3aa2f0" stroke="#1a70c0"/>
<path d="M3 7 Q5 2.5 9.5 2.5 Q12 3.5 11 6.5 Q9 8 10 10 Q8.5 12 9 14 Q7.5 16.5 6 16 Q5 13 5.5 11 Q2.5 10 3 7 Z" fill="#f2e030"/>
<path d="M13 4.5 Q17 5.5 18.5 9.5 Q18.5 14 15 17 Q12.5 15 13.5 12.5 Q11.5 10.5 12.5 8 Q11.5 6 13 4.5 Z" fill="#f2e030"/>
<ellipse cx="8" cy="5" rx="2.5" ry="1.5" fill="#ffffff" opacity="0.5"/>
</svg>
<div class="t ui" style="left:89px;top:658px">328 wiêcej...</div>
<div class="a" style="left:249px;top:433px;width:22px;height:264px;background:#f0f0f0"></div>
<svg class="a" style="left:255px;top:440px" width="10" height="7"><path d="M1 6 L5 2 L9 6" stroke="#606060" stroke-width="1.6" fill="none"/></svg>
<div class="a" style="left:251px;top:565px;width:18px;height:111px;background:#cdcdcd"></div>
<svg class="a" style="left:255px;top:682px" width="10" height="7"><path d="M1 1 L5 5 L9 1" stroke="#606060" stroke-width="1.6" fill="none"/></svg>
<div class="a" style="left:4px;top:697px;width:267px;height:1px;background:#333"></div>
<div class="a" style="left:7px;top:697px;width:74px;height:25px;background:#fff;border:1px solid #333;border-top:none"></div>
<div class="t ui" style="left:19px;top:702px">Ogólne</div>
<div class="t ui" style="left:94px;top:702px;color:#6d6d6d">Ulubione</div>
<div class="a" style="left:166px;top:701px;width:1px;height:17px;background:#6d6d6d"></div>
<div class="a" style="left:271px;top:414px;width:1px;height:310px;background:#fff"></div>
<div class="a" style="left:0;top:724px;width:272px;height:1px;background:#fff"></div>
<div class="a" style="left:0;top:729px;width:277px;height:1px;background:#a0a0a0"></div>
<div class="a" style="left:277px;top:94px;width:1640px;height:635px;background:#000;overflow:hidden">
<svg class="a" style="left:0;top:0" width="1640" height="635" viewBox="277 94 1640 635" shape-rendering="crispEdges"><rect x="280.5" y="97.5" width="1573" height="608" fill="none" stroke="#fff"/><path d="M281 619.5 H1853" stroke="#778899"/><path d="M1854 147.5 H1858" stroke="#fff"/><path d="M1854 197.5 H1858" stroke="#fff"/><path d="M1854 245.5 H1858" stroke="#fff"/><path d="M1854 294.5 H1858" stroke="#fff"/><path d="M1854 343.5 H1858" stroke="#fff"/><path d="M1854 392.5 H1858" stroke="#fff"/><path d="M1854 441.5 H1858" stroke="#fff"/><path d="M1854 490.5 H1858" stroke="#fff"/><path d="M1854 539.5 H1858" stroke="#fff"/><path d="M1854 588.5 H1858" stroke="#fff"/><path d="M1854 637.5 H1858" stroke="#fff"/><path d="M1854 686.5 H1858" stroke="#fff"/><path d="M281.5 706 V710" stroke="#fff"/><path d="M377.5 706 V710" stroke="#fff"/><path d="M473.5 706 V710" stroke="#fff"/><path d="M569.5 706 V710" stroke="#fff"/><path d="M665.5 706 V710" stroke="#fff"/><path d="M761.5 706 V710" stroke="#fff"/><path d="M857.5 706 V710" stroke="#fff"/><path d="M953.5 706 V710" stroke="#fff"/><path d="M1049.5 706 V710" stroke="#fff"/><path d="M1145.5 706 V710" stroke="#fff"/><path d="M1241.5 706 V710" stroke="#fff"/><path d="M1337.5 706 V710" stroke="#fff"/><path d="M1433.5 706 V710" stroke="#fff"/></svg>
<svg class="a" style="left:0;top:0" width="1640" height="635" viewBox="277 94 1640 635" shape-rendering="crispEdges"><defs><clipPath id="cc"><rect x="281" y="98" width="1572" height="607"/></clipPath></defs><g clip-path="url(#cc)"><path d="M281.5 157 V176" stroke="#00ff00"/><rect x="276.5" y="161.5" width="10" height="9" fill="#fff" stroke="#00ff00"/><path d="M297.5 152 V173" stroke="#00ff00"/><rect x="292.5" y="160.5" width="10" height="9" fill="#000" stroke="#00ff00"/><path d="M313.5 131 V200" stroke="#00ff00"/><rect x="308.5" y="159.5" width="10" height="32" fill="#fff" stroke="#00ff00"/><path d="M329.5 157 V205" stroke="#00ff00"/><rect x="324.5" y="186.5" width="10" height="6" fill="#000" stroke="#00ff00"/><path d="M345.5 161 V254" stroke="#00ff00"/><rect x="340.5" y="187.5" width="10" height="66" fill="#fff" stroke="#00ff00"/><path d="M361.5 248 V323" stroke="#00ff00"/><rect x="356.5" y="253.5" width="10" height="6" fill="#fff" stroke="#00ff00"/><path d="M377.5 249 V281" stroke="#00ff00"/><rect x="372.5" y="259.5" width="10" height="11" fill="#fff" stroke="#00ff00"/><path d="M393.5 264 V295" stroke="#00ff00"/><rect x="388.5" y="269.5" width="10" height="14" fill="#fff" stroke="#00ff00"/><path d="M409.5 249 V287" stroke="#00ff00"/><rect x="404.5" y="252.5" width="10" height="31" fill="#000" stroke="#00ff00"/><path d="M425.5 235 V261" stroke="#00ff00"/><rect x="420.5" y="238.5" width="10" height="14" fill="#000" stroke="#00ff00"/><path d="M441.5 236 V263" stroke="#00ff00"/><rect x="436.5" y="237.5" width="10" height="16" fill="#fff" stroke="#00ff00"/><path d="M457.5 245 V268" stroke="#00ff00"/><rect x="452.5" y="253.5" width="10" height="9" fill="#fff" stroke="#00ff00"/><path d="M473.5 240 V269" stroke="#00ff00"/><rect x="468.5" y="241.5" width="10" height="21" fill="#000" stroke="#00ff00"/><path d="M489.5 236 V259" stroke="#00ff00"/><rect x="484.5" y="241.5" width="10" height="12" fill="#fff" stroke="#00ff00"/><path d="M505.5 244 V262" stroke="#00ff00"/><rect x="500.5" y="249.5" width="10" height="4" fill="#000" stroke="#00ff00"/><path d="M521.5 238 V261" stroke="#00ff00"/><rect x="516.5" y="249.5" width="10" height="9" fill="#fff" stroke="#00ff00"/><path d="M537.5 257 V276" stroke="#00ff00"/><rect x="532.5" y="258.5" width="10" height="14" fill="#fff" stroke="#00ff00"/><path d="M553.5 250 V274" stroke="#00ff00"/><rect x="548.5" y="256.5" width="10" height="15" fill="#000" stroke="#00ff00"/><path d="M569.5 227 V262" stroke="#00ff00"/><rect x="564.5" y="235.5" width="10" height="21" fill="#000" stroke="#00ff00"/><path d="M585.5 209 V247" stroke="#00ff00"/><rect x="580.5" y="211.5" width="10" height="24" fill="#000" stroke="#00ff00"/><path d="M601.5 177 V218" stroke="#00ff00"/><rect x="596.5" y="181.5" width="10" height="31" fill="#000" stroke="#00ff00"/><path d="M617.5 179 V203" stroke="#00ff00"/><rect x="612.5" y="181.5" width="10" height="18" fill="#fff" stroke="#00ff00"/><path d="M633.5 180 V207" stroke="#00ff00"/><rect x="628.5" y="181.5" width="10" height="16" fill="#000" stroke="#00ff00"/><path d="M649.5 181 V194" stroke="#00ff00"/><rect x="644.5" y="181.5" width="10" height="12" fill="#fff" stroke="#00ff00"/><path d="M665.5 192 V236" stroke="#00ff00"/><rect x="660.5" y="192.5" width="10" height="25" fill="#fff" stroke="#00ff00"/><path d="M681.5 177 V233" stroke="#00ff00"/><rect x="676.5" y="178.5" width="10" height="39" fill="#000" stroke="#00ff00"/><path d="M697.5 127 V212" stroke="#00ff00"/><rect x="692.5" y="178.5" width="10" height="30" fill="#fff" stroke="#00ff00"/><path d="M713.5 197 V312" stroke="#00ff00"/><rect x="708.5" y="207.5" width="10" height="85" fill="#fff" stroke="#00ff00"/><path d="M729.5 291 V369" stroke="#00ff00"/><rect x="724.5" y="292.5" width="10" height="53" fill="#fff" stroke="#00ff00"/><path d="M745.5 331 V363" stroke="#00ff00"/><rect x="740.5" y="345.5" width="10" height="8" fill="#fff" stroke="#00ff00"/><path d="M761.5 353 V393" stroke="#00ff00"/><rect x="756.5" y="353.5" width="10" height="34" fill="#fff" stroke="#00ff00"/><path d="M777.5 378 V421" stroke="#00ff00"/><rect x="772.5" y="387.5" width="10" height="10" fill="#fff" stroke="#00ff00"/><path d="M793.5 384 V407" stroke="#00ff00"/><rect x="788.5" y="397.5" width="10" height="6" fill="#fff" stroke="#00ff00"/><path d="M809.5 388 V409" stroke="#00ff00"/><rect x="804.5" y="395.5" width="10" height="8" fill="#000" stroke="#00ff00"/><path d="M825.5 398 V432" stroke="#00ff00"/><rect x="820.5" y="417.5" width="10" height="10" fill="#000" stroke="#00ff00"/><path d="M841.5 400 V421" stroke="#00ff00"/><rect x="836.5" y="401.5" width="10" height="16" fill="#000" stroke="#00ff00"/><path d="M857.5 396 V431" stroke="#00ff00"/><rect x="852.5" y="401.5" width="10" height="25" fill="#fff" stroke="#00ff00"/><path d="M873.5 409 V443" stroke="#00ff00"/><rect x="868.5" y="426.5" width="10" height="13" fill="#fff" stroke="#00ff00"/><path d="M889.5 430 V451" stroke="#00ff00"/><path d="M884 439.5 H895" stroke="#00ff00"/><path d="M905.5 431 V447" stroke="#00ff00"/><rect x="900.5" y="439.5" width="10" height="4" fill="#fff" stroke="#00ff00"/><path d="M921.5 436 V455" stroke="#00ff00"/><rect x="916.5" y="443.5" width="10" height="8" fill="#fff" stroke="#00ff00"/><path d="M937.5 447 V484" stroke="#00ff00"/><rect x="932.5" y="451.5" width="10" height="26" fill="#fff" stroke="#00ff00"/><path d="M953.5 419 V480" stroke="#00ff00"/><rect x="948.5" y="434.5" width="10" height="44" fill="#000" stroke="#00ff00"/><path d="M969.5 421 V481" stroke="#00ff00"/><rect x="964.5" y="434.5" width="10" height="43" fill="#fff" stroke="#00ff00"/><path d="M985.5 445 V479" stroke="#00ff00"/><rect x="980.5" y="476.5" width="10" height="2" fill="#fff" stroke="#00ff00"/><path d="M1001.5 476 V554" stroke="#00ff00"/><rect x="996.5" y="478.5" width="10" height="46" fill="#fff" stroke="#00ff00"/><path d="M1017.5 506 V538" stroke="#00ff00"/><rect x="1012.5" y="523.5" width="10" height="9" fill="#fff" stroke="#00ff00"/><path d="M1033.5 489 V533" stroke="#00ff00"/><rect x="1028.5" y="497.5" width="10" height="35" fill="#000" stroke="#00ff00"/><path d="M1049.5 469 V528" stroke="#00ff00"/><rect x="1044.5" y="497.5" width="10" height="9" fill="#fff" stroke="#00ff00"/><path d="M1065.5 487 V543" stroke="#00ff00"/><rect x="1060.5" y="506.5" width="10" height="22" fill="#fff" stroke="#00ff00"/><path d="M1081.5 501 V589" stroke="#00ff00"/><rect x="1076.5" y="527.5" width="10" height="44" fill="#fff" stroke="#00ff00"/><path d="M1097.5 520 V585" stroke="#00ff00"/><rect x="1092.5" y="538.5" width="10" height="33" fill="#000" stroke="#00ff00"/><path d="M1113.5 533 V559" stroke="#00ff00"/><rect x="1108.5" y="537.5" width="10" height="11" fill="#fff" stroke="#00ff00"/><path d="M1129.5 530 V554" stroke="#00ff00"/><rect x="1124.5" y="544.5" width="10" height="4" fill="#000" stroke="#00ff00"/><path d="M1145.5 532 V561" stroke="#00ff00"/><rect x="1140.5" y="544.5" width="10" height="12" fill="#fff" stroke="#00ff00"/><path d="M1161.5 555 V570" stroke="#00ff00"/><rect x="1156.5" y="556.5" width="10" height="11" fill="#fff" stroke="#00ff00"/><path d="M1177.5 564 V585" stroke="#00ff00"/><rect x="1172.5" y="567.5" width="10" height="11" fill="#fff" stroke="#00ff00"/><path d="M1193.5 565 V585" stroke="#00ff00"/><rect x="1188.5" y="576.5" width="10" height="1" fill="#fff" stroke="#00ff00"/><path d="M1209.5 577 V646" stroke="#00ff00"/><rect x="1204.5" y="577.5" width="10" height="28" fill="#fff" stroke="#00ff00"/><path d="M1225.5 602 V632" stroke="#00ff00"/><rect x="1220.5" y="604.5" width="10" height="3" fill="#fff" stroke="#00ff00"/><path d="M1241.5 604 V627" stroke="#00ff00"/><rect x="1236.5" y="607.5" width="10" height="16" fill="#fff" stroke="#00ff00"/><path d="M1257.5 620 V692" stroke="#00ff00"/><rect x="1252.5" y="622.5" width="10" height="50" fill="#fff" stroke="#00ff00"/><path d="M1273.5 641 V676" stroke="#00ff00"/><rect x="1268.5" y="643.5" width="10" height="28" fill="#000" stroke="#00ff00"/><path d="M1289.5 633 V652" stroke="#00ff00"/><rect x="1284.5" y="642.5" width="10" height="1" fill="#000" stroke="#00ff00"/><path d="M1305.5 640 V667" stroke="#00ff00"/><rect x="1300.5" y="642.5" width="10" height="12" fill="#fff" stroke="#00ff00"/><path d="M1321.5 608 V658" stroke="#00ff00"/><rect x="1316.5" y="614.5" width="10" height="40" fill="#000" stroke="#00ff00"/><path d="M1337.5 609 V644" stroke="#00ff00"/><rect x="1332.5" y="613.5" width="10" height="1" fill="#000" stroke="#00ff00"/><path d="M1353.5 569 V615" stroke="#00ff00"/><rect x="1348.5" y="594.5" width="10" height="20" fill="#000" stroke="#00ff00"/><path d="M1369.5 579 V617" stroke="#00ff00"/><rect x="1364.5" y="591.5" width="10" height="3" fill="#000" stroke="#00ff00"/><path d="M1385.5 584 V607" stroke="#00ff00"/><rect x="1380.5" y="592.5" width="10" height="7" fill="#fff" stroke="#00ff00"/><path d="M1401.5 584 V619" stroke="#00ff00"/><rect x="1396.5" y="596.5" width="10" height="3" fill="#000" stroke="#00ff00"/><path d="M1417.5 563 V612" stroke="#00ff00"/><rect x="1412.5" y="596.5" width="10" height="10" fill="#fff" stroke="#00ff00"/><path d="M1433.5 549 V620" stroke="#00ff00"/><rect x="1428.5" y="570.5" width="10" height="37" fill="#000" stroke="#00ff00"/><path d="M1449.5 534 V657" stroke="#00ff00"/><rect x="1444.5" y="571.5" width="10" height="22" fill="#fff" stroke="#00ff00"/><path d="M1465.5 573 V633" stroke="#00ff00"/><rect x="1460.5" y="592.5" width="10" height="14" fill="#fff" stroke="#00ff00"/><path d="M1481.5 578 V625" stroke="#00ff00"/><rect x="1476.5" y="606.5" width="10" height="8" fill="#fff" stroke="#00ff00"/><path d="M1497.5 596 V625" stroke="#00ff00"/><rect x="1492.5" y="614.5" width="10" height="3" fill="#fff" stroke="#00ff00"/><path d="M1513.5 609 V634" stroke="#00ff00"/><rect x="1508.5" y="617.5" width="10" height="2" fill="#fff" stroke="#00ff00"/></g></svg>
<svg class="a" style="left:7px;top:11px" width="10" height="5"><path d="M0 0 H9 L4.5 4.5 Z" fill="#fff"/></svg>
<div class="chart" style="left:22px;top:8px;letter-spacing:0.25px">XAUUSD,H1&nbsp; 1823.52 1824.41 1821.84 1823.28</div>
<div class="chart" style="left:8px;top:33px;">Trader:</div>
<div class="chart" style="left:198px;top:33px;letter-spacing:-0.08px">-&nbsp; Expert: TPS GOLD Scalper EA</div>
<div class="chart" style="left:8px;top:57px;">Account:</div>
<div class="chart" style="left:8px;top:69px;letter-spacing:0.3px">Account Type: Demo</div>
<div class="chart" style="left:8px;top:81px;letter-spacing:0.24px">Account Leverage 1:1000</div>
<div class="chart" style="left:8px;top:105px;">Company: RoboForex Ltd</div>
<div class="chart" style="left:8px;top:117px;">Server: RoboForex-DemoPro</div>
<div class="chart" style="left:8px;top:129px;">Libraries Allowed</div>
<div class="chart" style="left:8px;top:141px;">Recomendation: XAUUSD H1</div>
<div class="chart" style="left:8px;top:153px;">&nbsp;Broker : Exness</div>
<div class="chart" style="left:8px;top:165px;letter-spacing:0.13px">Minimum Equity: 1000$</div>
<svg class="a" style="left:0;top:0" width="1640" height="635" viewBox="277 94 1640 635">
<path d="M328 127 H348 L352 125.4 L358.4 123 H391 L405 126 H428.5 L429.3 127 H470.5 V137.5 L455 139.8 H437 L428.5 136.3 L412 135 L405 137 L400 140.5 L382 143.2 H368.4 L356 140 L333.5 139.8 L333 135 H328 Z" fill="#fff" shape-rendering="crispEdges"/>
<path d="M368 131.5 H393" stroke="#000" stroke-width="1.5" stroke-dasharray="3 1 4 1 2 1 1 1 1 1 4"/>
<path d="M336 153 L361 151.3 L365 150 H387 L391 151.3 L395 152.6 V161 H336 Z" fill="#fff" shape-rendering="crispEdges"/>
</svg>
<svg class="a" style="left:0;top:0" width="1640" height="635" viewBox="277 94 1640 635">
<path d="M307 144.39999999999998 H310.5 V142.2 L315 146.7 L310.5 151.2 V149.0 H307 Z" fill="#ff0000" stroke="#fff" stroke-width="0.9"/>
<path d="M317 151 V159 L313 152 Z" fill="#ff0000"/>
<path d="M349 164 V171 L345.5 168 Z" fill="#2020ff" stroke="#fff" stroke-width="0.6"/>
<path d="M339.5 173.89999999999998 H343.0 V171.7 L347.5 176.2 L343.0 180.7 V178.5 H339.5 Z" fill="#2020ff" stroke="#fff" stroke-width="0.9"/>
<path d="M681.5 190 V217" stroke="#2020ff" stroke-dasharray="3 2"/>
<path d="M675.5 183.2 H679.0 V181.0 L683.5 185.5 L679.0 190.0 V187.8 H675.5 Z" fill="#2020ff" stroke="#fff" stroke-width="0.9"/>
<path d="M675.5 201.2 H679.0 V199.0 L683.5 203.5 L679.0 208.0 V205.8 H675.5 Z" fill="#2020ff" stroke="#fff" stroke-width="0.9"/>
<path d="M675.5 220.2 H679.0 V218.0 L683.5 222.5 L679.0 227.0 V224.8 H675.5 Z" fill="#2020ff" stroke="#fff" stroke-width="0.9"/>
<path d="M686 194 V203 L680.5 198.5 Z" fill="#2020ff" stroke="#fff" stroke-width="0.9"/>
<path d="M1443 611.2 H1446.5 V609.0 L1451 613.5 L1446.5 618.0 V615.8 H1443 Z" fill="#ff0000" stroke="#fff" stroke-width="0.9"/>
<path d="M1453 616.5 V624.5 L1448.5 620 Z" fill="#ff0000" stroke="#fff" stroke-width="0.9"/>
<path d="M1532 98 H1543 L1537.5 104 Z" fill="#8899aa"/>
</svg>
<div class="chart" style="left:1583px;top:48px;font-size:12px;letter-spacing:0.2px">1877.40</div>
<div class="chart" style="left:1583px;top:98px;font-size:12px;letter-spacing:0.2px">1871.80</div>
<div class="chart" style="left:1583px;top:146px;font-size:12px;letter-spacing:0.2px">1866.20</div>
<div class="chart" style="left:1583px;top:195px;font-size:12px;letter-spacing:0.2px">1860.60</div>
<div class="chart" style="left:1583px;top:244px;font-size:12px;letter-spacing:0.2px">1855.00</div>
<div class="chart" style="left:1583px;top:293px;font-size:12px;letter-spacing:0.2px">1849.30</div>
<div class="chart" style="left:1583px;top:342px;font-size:12px;letter-spacing:0.2px">1843.70</div>
<div class="chart" style="left:1583px;top:391px;font-size:12px;letter-spacing:0.2px">1838.10</div>
<div class="chart" style="left:1583px;top:440px;font-size:12px;letter-spacing:0.2px">1832.50</div>
<div class="chart" style="left:1583px;top:489px;font-size:12px;letter-spacing:0.2px">1826.90</div>
<div class="chart" style="left:1583px;top:538px;font-size:12px;letter-spacing:0.2px">1821.20</div>
<div class="chart" style="left:1583px;top:587px;font-size:12px;letter-spacing:0.2px">1815.60</div>
<div class="a" style="left:1579px;top:518px;width:54px;height:14px;background:#fff"></div>
<div class="chart" style="left:1583px;top:520px;font-size:12px;color:#000;letter-spacing:0.2px">1823.28</div>
<div class="chart" style="left:2px;top:617px;font-size:12px;letter-spacing:0.4px">28 Sep 2023</div>
<div class="chart" style="left:98px;top:617px;font-size:12px;letter-spacing:0.4px">28 Sep 19:00</div>
<div class="chart" style="left:194px;top:617px;font-size:12px;letter-spacing:0.4px">29 Sep 02:00</div>
<div class="chart" style="left:290px;top:617px;font-size:12px;letter-spacing:0.4px">29 Sep 08:00</div>
<div class="chart" style="left:386px;top:617px;font-size:12px;letter-spacing:0.4px">29 Sep 14:00</div>
<div class="chart" style="left:482px;top:617px;font-size:12px;letter-spacing:0.4px">29 Sep 20:00</div>
<div class="chart" style="left:578px;top:617px;font-size:12px;letter-spacing:0.4px">2 Oct 03:00</div>
<div class="chart" style="left:674px;top:617px;font-size:12px;letter-spacing:0.4px">2 Oct 09:00</div>
<div class="chart" style="left:770px;top:617px;font-size:12px;letter-spacing:0.4px">2 Oct 15:00</div>
<div class="chart" style="left:866px;top:617px;font-size:12px;letter-spacing:0.4px">2 Oct 21:00</div>
<div class="chart" style="left:962px;top:617px;font-size:12px;letter-spacing:0.4px">3 Oct 04:00</div>
<div class="chart" style="left:1058px;top:617px;font-size:12px;letter-spacing:0.4px">3 Oct 10:00</div>
<div class="chart" style="left:1154px;top:617px;font-size:12px;letter-spacing:0.4px">3 Oct 16:00</div>
<div class="chart" style="left:1443px;top:9px;font-size:12px;letter-spacing:-0.3px">TPS Gold Scalper Ea</div>
<svg class="a" style="left:1557px;top:7px" width="16" height="16" viewBox="0 0 16 16"><circle cx="8" cy="8" r="6.5" fill="none" stroke="#fff" stroke-width="1.2"/><circle cx="5.8" cy="6.3" r="1" fill="#fff"/><circle cx="10.2" cy="6.3" r="1" fill="#fff"/><path d="M4.8 11.5 Q8 8.5 11.2 11.5" stroke="#fff" fill="none" stroke-width="1.2"/></svg>
<div class="a" style="left:1439px;top:536px;width:122px;height:35px;background:#ff0000;border:1px solid #555"></div>
<div class="chart" style="left:1466px;top:543px;font-size:20px;font-weight:bold">PAUSE</div>
<div class="chart" style="left:1415px;top:574px;font-size:18px;font-weight:bold;color:#32cd32;letter-spacing:1.5px">00:29:14 (48%)</div>
</div>
<div class="a" style="left:276px;top:94px;width:2px;height:635px;background:linear-gradient(to right,#b0b0b0,#707070)"></div>
<div class="a" style="left:0;top:729px;width:1917px;height:1px;background:#fff"></div>
<svg class="a" style="left:4px;top:737px" width="10" height="9" viewBox="0 0 10 9"><path d="M1.5 1 L8.5 8 M8.5 1 L1.5 8" stroke="#000" stroke-width="1.6"/></svg>
<div class="a" style="left:2px;top:753px;width:16px;height:214px;background:#c9d7e7"></div>
<div class="a" style="left:20px;top:938px;width:1px;height:28px;background:#a0a0a0"></div>
<div class="t" style="left:4px;top:964px;font-size:14px;transform:rotate(-90deg);transform-origin:0 0;color:#222">Terminal</div>
<div class="a" style="left:20px;top:735px;width:1893px;height:203px;background:#fff;border-top:1px solid #a0a0a0;border-left:1px solid #a0a0a0"></div>
<div class="a" style="left:219px;top:736px;width:1px;height:26px;background:#e5e5e5"></div>
<div class="cell" style="left:26px;top:742px">Czas</div>
<div class="cell" style="left:226px;top:742px">Wiadomoœæ</div>
<div class="a" style="left:21px;top:762px;width:1871px;height:1px;background:#c8c8c8"></div>
<div class="a" style="left:21px;top:763px;width:1871px;height:23px;background:#ebebeb"></div>
<div class="a" style="left:21px;top:786px;width:1871px;height:1px;background:#c8c8c8"></div>
<svg class="a" style="left:26px;top:769px" width="11" height="11" viewBox="0 0 11 11"><circle cx="5.5" cy="5.5" r="4.5" fill="#a8a8a8" stroke="#808080"/><circle cx="4.8" cy="4.8" r="2.2" fill="#d0d0d0"/></svg>
<div class="cell" style="left:47px;top:767px;letter-spacing:-0.54px">2023.10.03 20:29:14.781</div>
<div class="cell" style="left:225px;top:767px;letter-spacing:-0.23px">TPS Gold Scalper Ea XAUUSD,H1: Insufficient Candles, Market Offline or MT4 Offline</div>
<div class="a" style="left:21px;top:787px;width:1871px;height:24px;background:#fff"></div>
<div class="a" style="left:21px;top:811px;width:1871px;height:1px;background:#c8c8c8"></div>
<svg class="a" style="left:26px;top:794px" width="11" height="11" viewBox="0 0 11 11"><circle cx="5.5" cy="5.5" r="4.5" fill="#a8a8a8" stroke="#808080"/><circle cx="4.8" cy="4.8" r="2.2" fill="#d0d0d0"/></svg>
<div class="cell" style="left:47px;top:792px;letter-spacing:-0.54px">2023.10.03 20:29:14.750</div>
<div class="cell" style="left:225px;top:792px;letter-spacing:-0.23px">TPS Gold Scalper Ea XAUUSD,H1: Insufficient Candles, Market Offline or MT4 Offline</div>
<div class="a" style="left:21px;top:812px;width:1871px;height:24px;background:#ebebeb"></div>
<div class="a" style="left:21px;top:836px;width:1871px;height:1px;background:#c8c8c8"></div>
<svg class="a" style="left:26px;top:819px" width="11" height="11" viewBox="0 0 11 11"><circle cx="5.5" cy="5.5" r="4.5" fill="#a8a8a8" stroke="#808080"/><circle cx="4.8" cy="4.8" r="2.2" fill="#d0d0d0"/></svg>
<div class="cell" style="left:47px;top:817px;letter-spacing:-0.54px">2023.10.03 20:29:14.000</div>
<div class="cell" style="left:225px;top:817px;letter-spacing:-0.23px">TPS Gold Scalper Ea XAUUSD,H1: Insufficient Candles, Market Offline or MT4 Offline</div>
<div class="a" style="left:21px;top:837px;width:1871px;height:24px;background:#fff"></div>
<div class="a" style="left:21px;top:861px;width:1871px;height:1px;background:#c8c8c8"></div>
<svg class="a" style="left:26px;top:844px" width="11" height="11" viewBox="0 0 11 11"><circle cx="5.5" cy="5.5" r="4.5" fill="#a8a8a8" stroke="#808080"/><circle cx="4.8" cy="4.8" r="2.2" fill="#d0d0d0"/></svg>
<div class="cell" style="left:47px;top:842px;letter-spacing:-0.54px">2023.10.03 20:29:13.896</div>
<div class="cell" style="left:225px;top:842px;letter-spacing:-0.23px">TPS Gold Scalper Ea XAUUSD,H1: Insufficient Candles, Market Offline or MT4 Offline</div>
<div class="a" style="left:21px;top:862px;width:1871px;height:24px;background:#ebebeb"></div>
<div class="a" style="left:21px;top:886px;width:1871px;height:1px;background:#c8c8c8"></div>
<svg class="a" style="left:26px;top:869px" width="11" height="11" viewBox="0 0 11 11"><circle cx="5.5" cy="5.5" r="4.5" fill="#a8a8a8" stroke="#808080"/><circle cx="4.8" cy="4.8" r="2.2" fill="#d0d0d0"/></svg>
<div class="cell" style="left:47px;top:867px;letter-spacing:-0.54px">2023.10.03 20:29:13.828</div>
<div class="cell" style="left:225px;top:867px;letter-spacing:-0.23px">TPS Gold Scalper Ea XAUUSD,H1: Insufficient Candles, Market Offline or MT4 Offline</div>
<div class="a" style="left:21px;top:887px;width:1871px;height:24px;background:#fff"></div>
<div class="a" style="left:21px;top:911px;width:1871px;height:1px;background:#c8c8c8"></div>
<svg class="a" style="left:26px;top:894px" width="11" height="11" viewBox="0 0 11 11"><circle cx="5.5" cy="5.5" r="4.5" fill="#a8a8a8" stroke="#808080"/><circle cx="4.8" cy="4.8" r="2.2" fill="#d0d0d0"/></svg>
<div class="cell" style="left:47px;top:892px;letter-spacing:-0.54px">2023.10.03 20:29:13.187</div>
<div class="cell" style="left:225px;top:892px;letter-spacing:-0.23px">TPS Gold Scalper Ea XAUUSD,H1: Insufficient Candles, Market Offline or MT4 Offline</div>
<div class="a" style="left:21px;top:912px;width:1871px;height:24px;background:#ebebeb"></div>
<div class="a" style="left:21px;top:936px;width:1871px;height:1px;background:#c8c8c8"></div>
<svg class="a" style="left:26px;top:919px" width="11" height="11" viewBox="0 0 11 11"><circle cx="5.5" cy="5.5" r="4.5" fill="#a8a8a8" stroke="#808080"/><circle cx="4.8" cy="4.8" r="2.2" fill="#d0d0d0"/></svg>
<div class="cell" style="left:47px;top:917px;letter-spacing:-0.54px">2023.10.03 20:29:11.609</div>
<div class="cell" style="left:225px;top:917px;letter-spacing:-0.23px">TPS Gold Scalper Ea XAUUSD,H1: Insufficient Candles, Market Offline or MT4 Offline</div>
<div class="a" style="left:219px;top:762px;width:1px;height:175px;background:#d8d8d8"></div>
<div class="a" style="left:1892px;top:736px;width:21px;height:201px;background:#f0f0f0"></div>
<svg class="a" style="left:1897px;top:743px" width="10" height="7"><path d="M1 6 L5 2 L9 6" stroke="#606060" stroke-width="1.6" fill="none"/></svg>
<div class="a" style="left:1893px;top:757px;width:19px;height:21px;background:#cdcdcd"></div>
<svg class="a" style="left:1897px;top:924px" width="10" height="7"><path d="M1 1 L5 5 L9 1" stroke="#606060" stroke-width="1.6" fill="none"/></svg>
<div class="a" style="left:20px;top:938px;width:1893px;height:1px;background:#333"></div>
<div class="a" style="left:1029px;top:938px;width:85px;height:26px;background:#fff;border:1px solid #333;border-top:none"></div>
<div class="t ui" style="left:35px;top:944px;color:#6d6d6d;letter-spacing:0px">Handel</div>
<div class="a" style="left:95px;top:944px;width:1px;height:17px;background:#6d6d6d"></div>
<div class="t ui" style="left:107px;top:944px;color:#6d6d6d;letter-spacing:0px">Aktywa</div>
<div class="a" style="left:168px;top:944px;width:1px;height:17px;background:#6d6d6d"></div>
<div class="t ui" style="left:181px;top:944px;color:#6d6d6d;letter-spacing:-0.15px">Historia rachunku</div>
<div class="a" style="left:308px;top:944px;width:1px;height:17px;background:#6d6d6d"></div>
<div class="t ui" style="left:321px;top:944px;color:#6d6d6d;letter-spacing:-0.2px">Wiadomoœci</div>
<div class="t" style="left:415px;top:951px;font-size:12px;font-weight:bold;color:#e0202a;letter-spacing:0.3px">14</div>
<div class="a" style="left:441px;top:944px;width:1px;height:17px;background:#6d6d6d"></div>
<div class="t ui" style="left:454px;top:944px;color:#6d6d6d;letter-spacing:0px">Alarmy</div>
<div class="a" style="left:514px;top:944px;width:1px;height:17px;background:#6d6d6d"></div>
<div class="t ui" style="left:526px;top:944px;color:#6d6d6d;letter-spacing:-0.45px">Skrzynka pocztowa</div>
<div class="t" style="left:656px;top:951px;font-size:12px;font-weight:bold;color:#e0202a;letter-spacing:0.3px">11</div>
<div class="a" style="left:681px;top:944px;width:1px;height:17px;background:#6d6d6d"></div>
<div class="t ui" style="left:694px;top:944px;color:#6d6d6d;letter-spacing:-0.35px">Rynek</div>
<div class="t" style="left:737px;top:951px;font-size:12px;font-weight:bold;color:#e0202a;letter-spacing:0.3px">133</div>
<div class="a" style="left:769px;top:944px;width:1px;height:17px;background:#6d6d6d"></div>
<div class="t ui" style="left:782px;top:944px;color:#6d6d6d;letter-spacing:0px">Sygna<span style="font-size:10px;position:relative;top:-5px;margin:0 0.5px">3</span>y</div>
<div class="a" style="left:847px;top:944px;width:1px;height:17px;background:#6d6d6d"></div>
<div class="t ui" style="left:860px;top:944px;color:#6d6d6d;letter-spacing:0px">Artyku<span style="font-size:10px;position:relative;top:-5px;margin:0 0.5px">3</span>y</div>
<div class="t" style="left:918px;top:951px;font-size:12px;font-weight:bold;color:#e0202a;letter-spacing:0.3px">4</div>
<div class="a" style="left:937px;top:944px;width:1px;height:17px;background:#6d6d6d"></div>
<div class="t ui" style="left:950px;top:944px;color:#6d6d6d;letter-spacing:0px">Biblioteka</div>
<div class="a" style="left:1029px;top:944px;width:1px;height:17px;background:#6d6d6d"></div>
<div class="t ui" style="left:1041px;top:944px;color:#000;letter-spacing:0px">Strategie</div>
<div class="t ui" style="left:1127px;top:944px;color:#6d6d6d;letter-spacing:0px">Dziennik</div>
<div class="a" style="left:1197px;top:944px;width:1px;height:17px;background:#6d6d6d"></div>
<div class="a" style="left:1913px;top:735px;width:1px;height:232px;background:#fff"></div>
<div class="a" style="left:0;top:970px;width:1917px;height:1px;background:#a0a0a0"></div>
<div class="a" style="left:0;top:971px;width:1917px;height:1px;background:#fff"></div>
<div class="t ui" style="left:1px;top:981px">Aby otworzyæ okno pomocy, wciœnij F1</div>
<div class="a" style="left:1045px;top:975px;width:1px;height:28px;background:#c8c8c8"></div>
<div class="a" style="left:1195px;top:975px;width:1px;height:28px;background:#c8c8c8"></div>
<div class="a" style="left:1326px;top:975px;width:1px;height:28px;background:#c8c8c8"></div>
<div class="a" style="left:1415px;top:975px;width:1px;height:28px;background:#c8c8c8"></div>
<div class="a" style="left:1504px;top:975px;width:1px;height:28px;background:#c8c8c8"></div>
<div class="a" style="left:1589px;top:975px;width:1px;height:28px;background:#c8c8c8"></div>
<div class="a" style="left:1676px;top:975px;width:1px;height:28px;background:#c8c8c8"></div>
<div class="a" style="left:1760px;top:975px;width:1px;height:28px;background:#c8c8c8"></div>
<div class="t ui" style="left:1053px;top:981px;letter-spacing:0px">Default</div>
<div class="t ui" style="left:1201px;top:981px;letter-spacing:-0.49px">2023.10.02 23:00</div>
<div class="t ui" style="left:1332px;top:981px;letter-spacing:-0.48px">O: 1829.30</div>
<div class="t ui" style="left:1421px;top:981px;letter-spacing:-0.48px">H: 1829.63</div>
<div class="t ui" style="left:1510px;top:981px;letter-spacing:-0.6px">L: 1827.43</div>
<div class="t ui" style="left:1594px;top:981px;letter-spacing:-0.6px">C: 1828.03</div>
<div class="t ui" style="left:1682px;top:981px;letter-spacing:-0.45px">V: 1747</div>
<div class="t ui" style="left:1802px;top:981px;letter-spacing:0px">57/1 kb</div>
<svg class="a" style="left:1765px;top:979px" width="34" height="17"><rect x="1" y="0" width="3" height="11" fill="#4a7000"/><rect x="1" y="12" width="3" height="4" fill="#003a5a"/><rect x="5" y="0" width="3" height="10" fill="#4a7000"/><rect x="5" y="11" width="3" height="5" fill="#003a5a"/><rect x="9" y="0" width="3" height="9" fill="#4a7000"/><rect x="9" y="10" width="3" height="6" fill="#003a5a"/><rect x="13" y="0" width="3" height="8" fill="#4a7000"/><rect x="13" y="9" width="3" height="7" fill="#003a5a"/><rect x="17" y="0" width="3" height="6" fill="#4a7000"/><rect x="17" y="7" width="3" height="9" fill="#003a5a"/><rect x="21" y="0" width="3" height="5" fill="#4a7000"/><rect x="21" y="6" width="3" height="10" fill="#003a5a"/><rect x="25" y="0" width="3" height="4" fill="#4a7000"/><rect x="25" y="5" width="3" height="11" fill="#003a5a"/><rect x="29" y="0" width="3" height="3" fill="#4a7000"/><rect x="29" y="4" width="3" height="12" fill="#003a5a"/></svg>
<div class="a" style="left:0;top:1002px;width:1917px;height:1px;background:#000"></div>
</body></html>
